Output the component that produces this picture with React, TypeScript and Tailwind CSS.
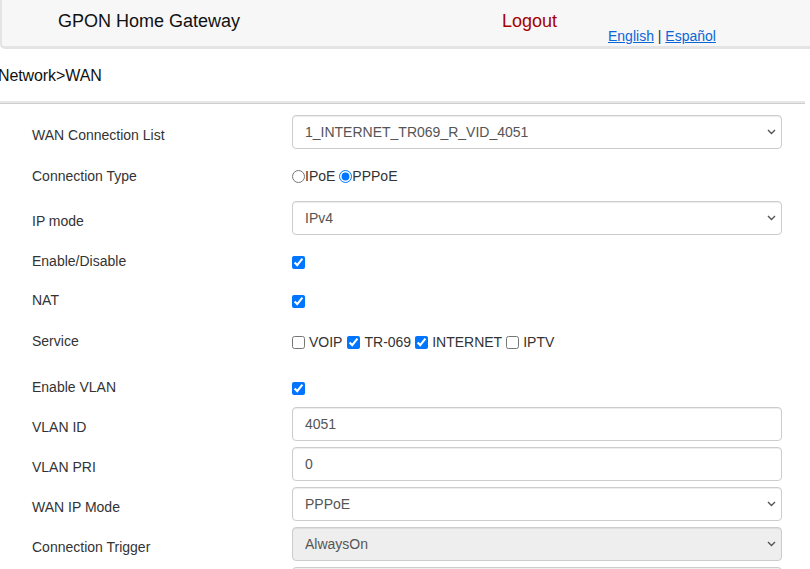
import type { ReactNode } from 'react';

function Chevron() {
  return (
    <svg width="9" height="6" viewBox="0 0 9 6" className="block">
      <path d="M1 1l3.5 3.5L8 1" stroke="#555" strokeWidth="1.4" fill="none" />
    </svg>
  );
}

function Row({
  label,
  children,
  className = '',
  labelClass = '',
}: {
  label: string;
  children: ReactNode;
  className?: string;
  labelClass?: string;
}) {
  return (
    <div className={`flex items-center pl-8 pr-7 ${className}`}>
      <div className={`w-[260px] shrink-0 text-sm text-[#333] ${labelClass}`}>
        {label}
      </div>
      <div className="flex min-w-0 flex-1 items-center">{children}</div>
    </div>
  );
}

function SelectBox({ value, disabled }: { value: string; disabled?: boolean }) {
  return (
    <div className="relative w-full">
      <select
        disabled={disabled}
        defaultValue={value}
        className={`h-[34px] w-full appearance-none rounded border border-[#ccc] px-3 text-sm text-[#555] opacity-100 shadow-[inset_0_1px_1px_rgba(0,0,0,0.075)] ${
          disabled ? 'bg-[#eeeeee]' : 'bg-white'
        }`}
      >
        <option>{value}</option>
      </select>
      <span className="pointer-events-none absolute top-1/2 right-[6px] -translate-y-1/2">
        <Chevron />
      </span>
    </div>
  );
}

function TextBox({ value }: { value: string }) {
  return (
    <input
      readOnly
      value={value}
      className="h-[34px] w-full rounded border border-[#ccc] bg-white px-3 text-sm text-[#555] shadow-[inset_0_1px_1px_rgba(0,0,0,0.075)] outline-none"
    />
  );
}

function Check({ on }: { on: boolean }) {
  return <input type="checkbox" readOnly checked={on} className="h-[13px] w-[13px]" />;
}

export default function App() {
  return (
    <div className="h-[569px] overflow-hidden bg-white font-['Liberation_Sans',Arial,sans-serif] text-[#222]">
      {/* top bar */}
      <div className="flex h-[49px] items-start rounded-bl-[5px] border-b-[3px] border-l-2 border-[#e4e4e4] bg-[#f7f7f7]">
        <div className="w-[500px] shrink-0 pt-[11px] pl-[56px] text-lg leading-5 text-[#111]">
          GPON Home Gateway
        </div>
        <div className="w-[106px] shrink-0 pt-[11px] text-lg leading-5 text-[#a50000]">
          Logout
        </div>
        <div className="mt-[27px] text-sm leading-[18px] text-[#333]">
          <a href="#" className="text-[#0a66d6] underline">
            English
          </a>{' '}
          |{' '}
          <a href="#" className="text-[#0a66d6] underline">
            Español
          </a>
        </div>
      </div>

      {/* breadcrumb */}
      <div className="h-[52px] pt-[18px] -ml-[2px] text-base leading-[18px] tracking-[-0.1px] text-[#111]">
        Network&gt;WAN
      </div>
      <div className="mr-[5px] h-[3px] border-b border-[#cfcfcf] bg-[#e6e6e6]" />

      {/* form */}
      <div className="flex flex-col pt-[11px]">
        <Row label="WAN Connection List" className="h-[34px]" labelClass="pt-[5px]">
          <SelectBox value="1_INTERNET_TR069_R_VID_4051" />
        </Row>

        <Row label="Connection Type" className="h-[52px] pt-[2px]">
          <label className="flex items-center text-sm text-[#333]">
            <input type="radio" name="ctype" readOnly className="h-[13px] w-[13px]" />
            IPoE
          </label>
          <span className="w-[4px]" />
          <label className="flex items-center text-sm text-[#333]">
            <input type="radio" name="ctype" readOnly checked className="h-[13px] w-[13px]" />
            PPPoE
          </label>
        </Row>

        <Row label="IP mode" className="h-[34px]" labelClass="pt-[5px]">
          <SelectBox value="IPv4" />
        </Row>

        <Row label="Enable/Disable" className="h-[54px]" labelClass="-mt-[2px]">
          <Check on />
        </Row>

        <Row label="NAT" className="h-[24px]" labelClass="-mt-[2px]">
          <Check on />
        </Row>

        <Row label="Service" className="h-[58px]" labelClass="-mt-[2px]">
          <div className="flex items-center gap-[4px] text-sm text-[#333]">
            <Check on={false} />
            <span className="mr-[1px]">VOIP</span>
            <Check on />
            <span>TR-069</span>
            <Check on />
            <span>INTERNET</span>
            <Check on={false} />
            <span>IPTV</span>
          </div>
        </Row>

        <Row label="Enable VLAN" className="h-[34px]" labelClass="-mt-[2px]">
          <Check on />
        </Row>

        <Row label="VLAN ID" className="mt-[2px] h-[34px]" labelClass="pt-[5px]">
          <TextBox value="4051" />
        </Row>

        <Row label="VLAN PRI" className="mt-[6px] h-[34px]" labelClass="pt-[5px]">
          <TextBox value="0" />
        </Row>

        <Row label="WAN IP Mode" className="mt-[6px] h-[34px]" labelClass="pt-[5px]">
          <SelectBox value="PPPoE" />
        </Row>

        <Row label="Connection Trigger" className="mt-[6px] h-[34px]" labelClass="pt-[5px]">
          <SelectBox value="AlwaysOn" disabled />
        </Row>

        <Row label="" className="mt-[6px] h-[34px]">
          <TextBox value="" />
        </Row>
      </div>
    </div>
  );
}
